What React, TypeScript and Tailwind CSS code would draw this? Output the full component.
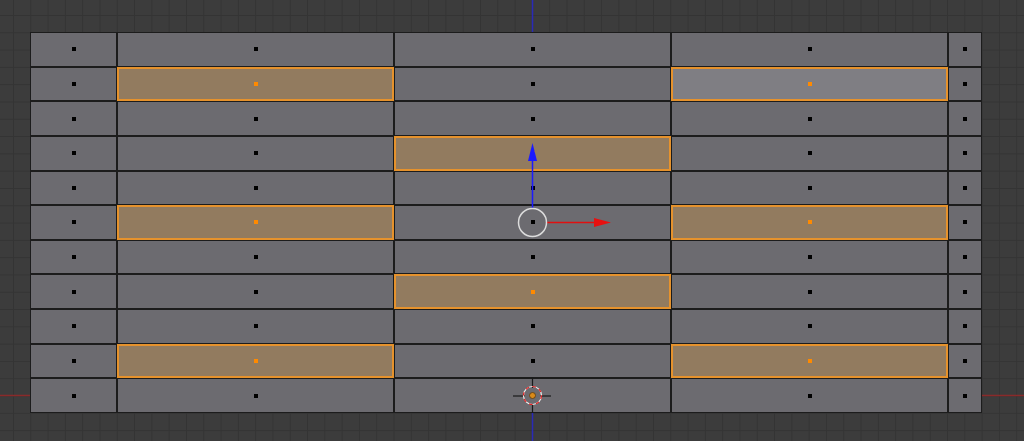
import React from "react";

const COLS = ["85px", "275px", "275px", "275px", "32px"];

type Kind = "n" | "s" | "a";

const selected: Record<string, Kind> = {
  "1-1": "s",
  "1-3": "a",
  "3-2": "s",
  "5-1": "s",
  "5-3": "s",
  "7-2": "s",
  "9-1": "s",
  "9-3": "s",
};

function Face({ kind }: { kind: Kind }) {
  const base = "flex items-center justify-center";
  if (kind === "s") {
    return (
      <div className={`${base} relative z-10 bg-[#927b5f] outline-2 outline-[#e6922c] -outline-offset-1`}>
        <div className="w-[4px] h-[4px] bg-[#ff8a00]" />
      </div>
    );
  }
  if (kind === "a") {
    return (
      <div className={`${base} relative z-10 bg-[#7f7e83] outline-2 outline-[#e6922c] -outline-offset-1`}>
        <div className="w-[4px] h-[4px] bg-[#ff8a00]" />
      </div>
    );
  }
  return (
    <div className={`${base} bg-[#6c6b70]`}>
      <div className="w-[4px] h-[4px] bg-black" />
    </div>
  );
}

export default function App() {
  const cells: React.ReactNode[] = [];
  for (let r = 0; r < 11; r++) {
    for (let c = 0; c < 5; c++) {
      const k = selected[`${r}-${c}`] ?? "n";
      cells.push(<Face key={`${r}-${c}`} kind={k} />);
    }
  }
  return (
    <div className="relative w-[1024px] h-[441px] overflow-hidden bg-[#3c3c3c] bg-[linear-gradient(to_right,#343434_1px,transparent_1px),linear-gradient(to_bottom,#343434_1px,transparent_1px)] bg-[size:17.3px_17.3px] bg-[position:13px_15px] pt-[32px] pl-[30px]">
      {/* world axes behind the mesh */}
      <svg className="absolute inset-0 pointer-events-none" width="1024" height="441">
        <line x1="532.5" y1="0" x2="532.5" y2="441" stroke="#2a2ab8" strokeWidth="1.5" />
        <line x1="0" y1="395.5" x2="1024" y2="395.5" stroke="#8a2a2a" strokeWidth="1.5" />
      </svg>

      <div
        className="relative grid w-[952px] h-[381px] p-[1px] gap-[2px] bg-[#1c1c1c]"
        style={{ gridTemplateColumns: COLS.join(" "), gridTemplateRows: "repeat(11, 1fr)" }}
      >
        {cells}
      </div>

      {/* manipulator and 3D cursor */}
      <svg className="absolute inset-0 z-20 pointer-events-none" width="1024" height="441">
        <line x1="532.5" y1="208" x2="532.5" y2="158" stroke="#1a1aff" strokeWidth="1.5" />
        <polygon points="532.5,143 528,161 537,161" fill="#1a1aff" />
        <line x1="546.5" y1="222.5" x2="598" y2="222.5" stroke="#e01010" strokeWidth="1.5" />
        <polygon points="611,222.5 594,218 594,227" fill="#e81010" />
        <circle cx="532.5" cy="222.5" r="14" fill="none" stroke="#dcdcdc" strokeWidth="1.5" />

        <line x1="513" y1="396" x2="525" y2="396" stroke="#1a1a1a" strokeWidth="1.2" />
        <line x1="540" y1="396" x2="551" y2="396" stroke="#1a1a1a" strokeWidth="1.2" />
        <line x1="532.5" y1="377" x2="532.5" y2="388" stroke="#1a1a1a" strokeWidth="1.2" />
        <line x1="532.5" y1="404" x2="532.5" y2="413" stroke="#1a1a1a" strokeWidth="1.2" />
        <circle cx="532.5" cy="395.5" r="9" fill="none" stroke="#f0f0f0" strokeWidth="1.2" />
        <circle cx="532.5" cy="395.5" r="9" fill="none" stroke="#e02020" strokeWidth="1.2" strokeDasharray="3.5 3.5" />
        <circle cx="532.5" cy="395.5" r="3" fill="#d98a1a" stroke="#5a3a10" strokeWidth="0.8" />
      </svg>
    </div>
  );
}
